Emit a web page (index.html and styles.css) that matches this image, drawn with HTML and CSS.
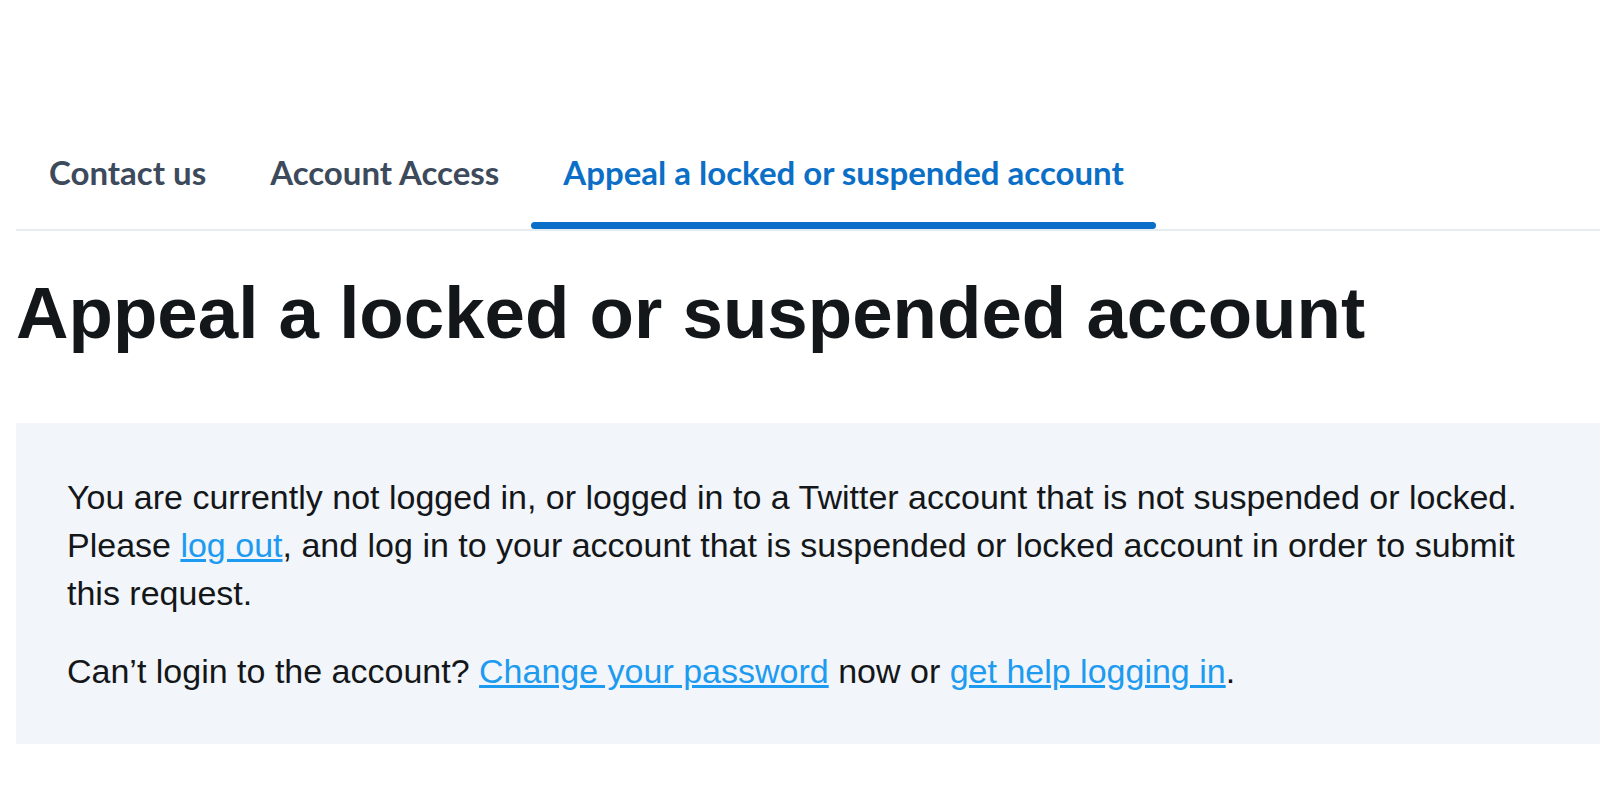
FILE: index.html
```html
<!DOCTYPE html>
<html lang="en">
<head>
<meta charset="utf-8">
<title>Appeal a locked or suspended account</title>
<link rel="stylesheet" href="styles.css">
</head>
<body>
<div class="page">
  <nav class="tabs">
    <a class="tab" href="#">Contact us</a>
    <a class="tab" href="#">Account Access</a>
    <a class="tab active" href="#">Appeal a locked or suspended account</a>
  </nav>
  <h1 class="title">Appeal a locked or suspended account</h1>
  <div class="notice">
    <p>You are currently not logged in, or logged in to a Twitter account that is not suspended or locked. Please <a href="#">log out</a>, and log in to your account that is suspended or locked account in order to submit this request.</p>
    <p>Can’t login to the account? <a href="#">Change your password</a> now or <a href="#">get help logging in</a>.</p>
  </div>
</div>
</body>
</html>
```
FILE: styles.css
```css
html, body {
  margin: 0;
  padding: 0;
  background: #ffffff;
}

.page {
  padding: 152px 0 0 16px;
  font-family: "Liberation Sans", Arial, sans-serif;
}

.tabs {
  display: flex;
  border-bottom: 2px solid #e6ecf0;
}

.tab {
  position: relative;
  display: block;
  padding: 0 32px 37px;
  font-family: Lato, "Open Sans", sans-serif;
  font-weight: 700;
  font-size: 33px;
  line-height: 40px;
  color: #3c4a5b;
  text-decoration: none;
}

.tab:first-child {
  padding-left: 33px;
}

.tab.active {
  color: #0b6fc7;
}

.tab.active::after {
  content: "";
  position: absolute;
  left: 0;
  right: 0;
  bottom: 0;
  height: 7px;
  border-radius: 4px;
  background: #0a6fc8;
}

.title {
  margin: 38px 0 0;
  font-size: 72.7px;
  line-height: 88px;
  font-weight: 700;
  color: #14171a;
}

.notice {
  margin-top: 66px;
  background: #f2f5f9;
  padding: 50px 50px 49px 51px;
}

.notice p {
  margin: 0;
  font-size: 34px;
  line-height: 48px;
  color: #14171a;
  max-width: 1480px;
}

.notice p + p {
  margin-top: 30px;
}

.notice a {
  color: #1d9bf0;
  text-decoration: underline;
}
```
